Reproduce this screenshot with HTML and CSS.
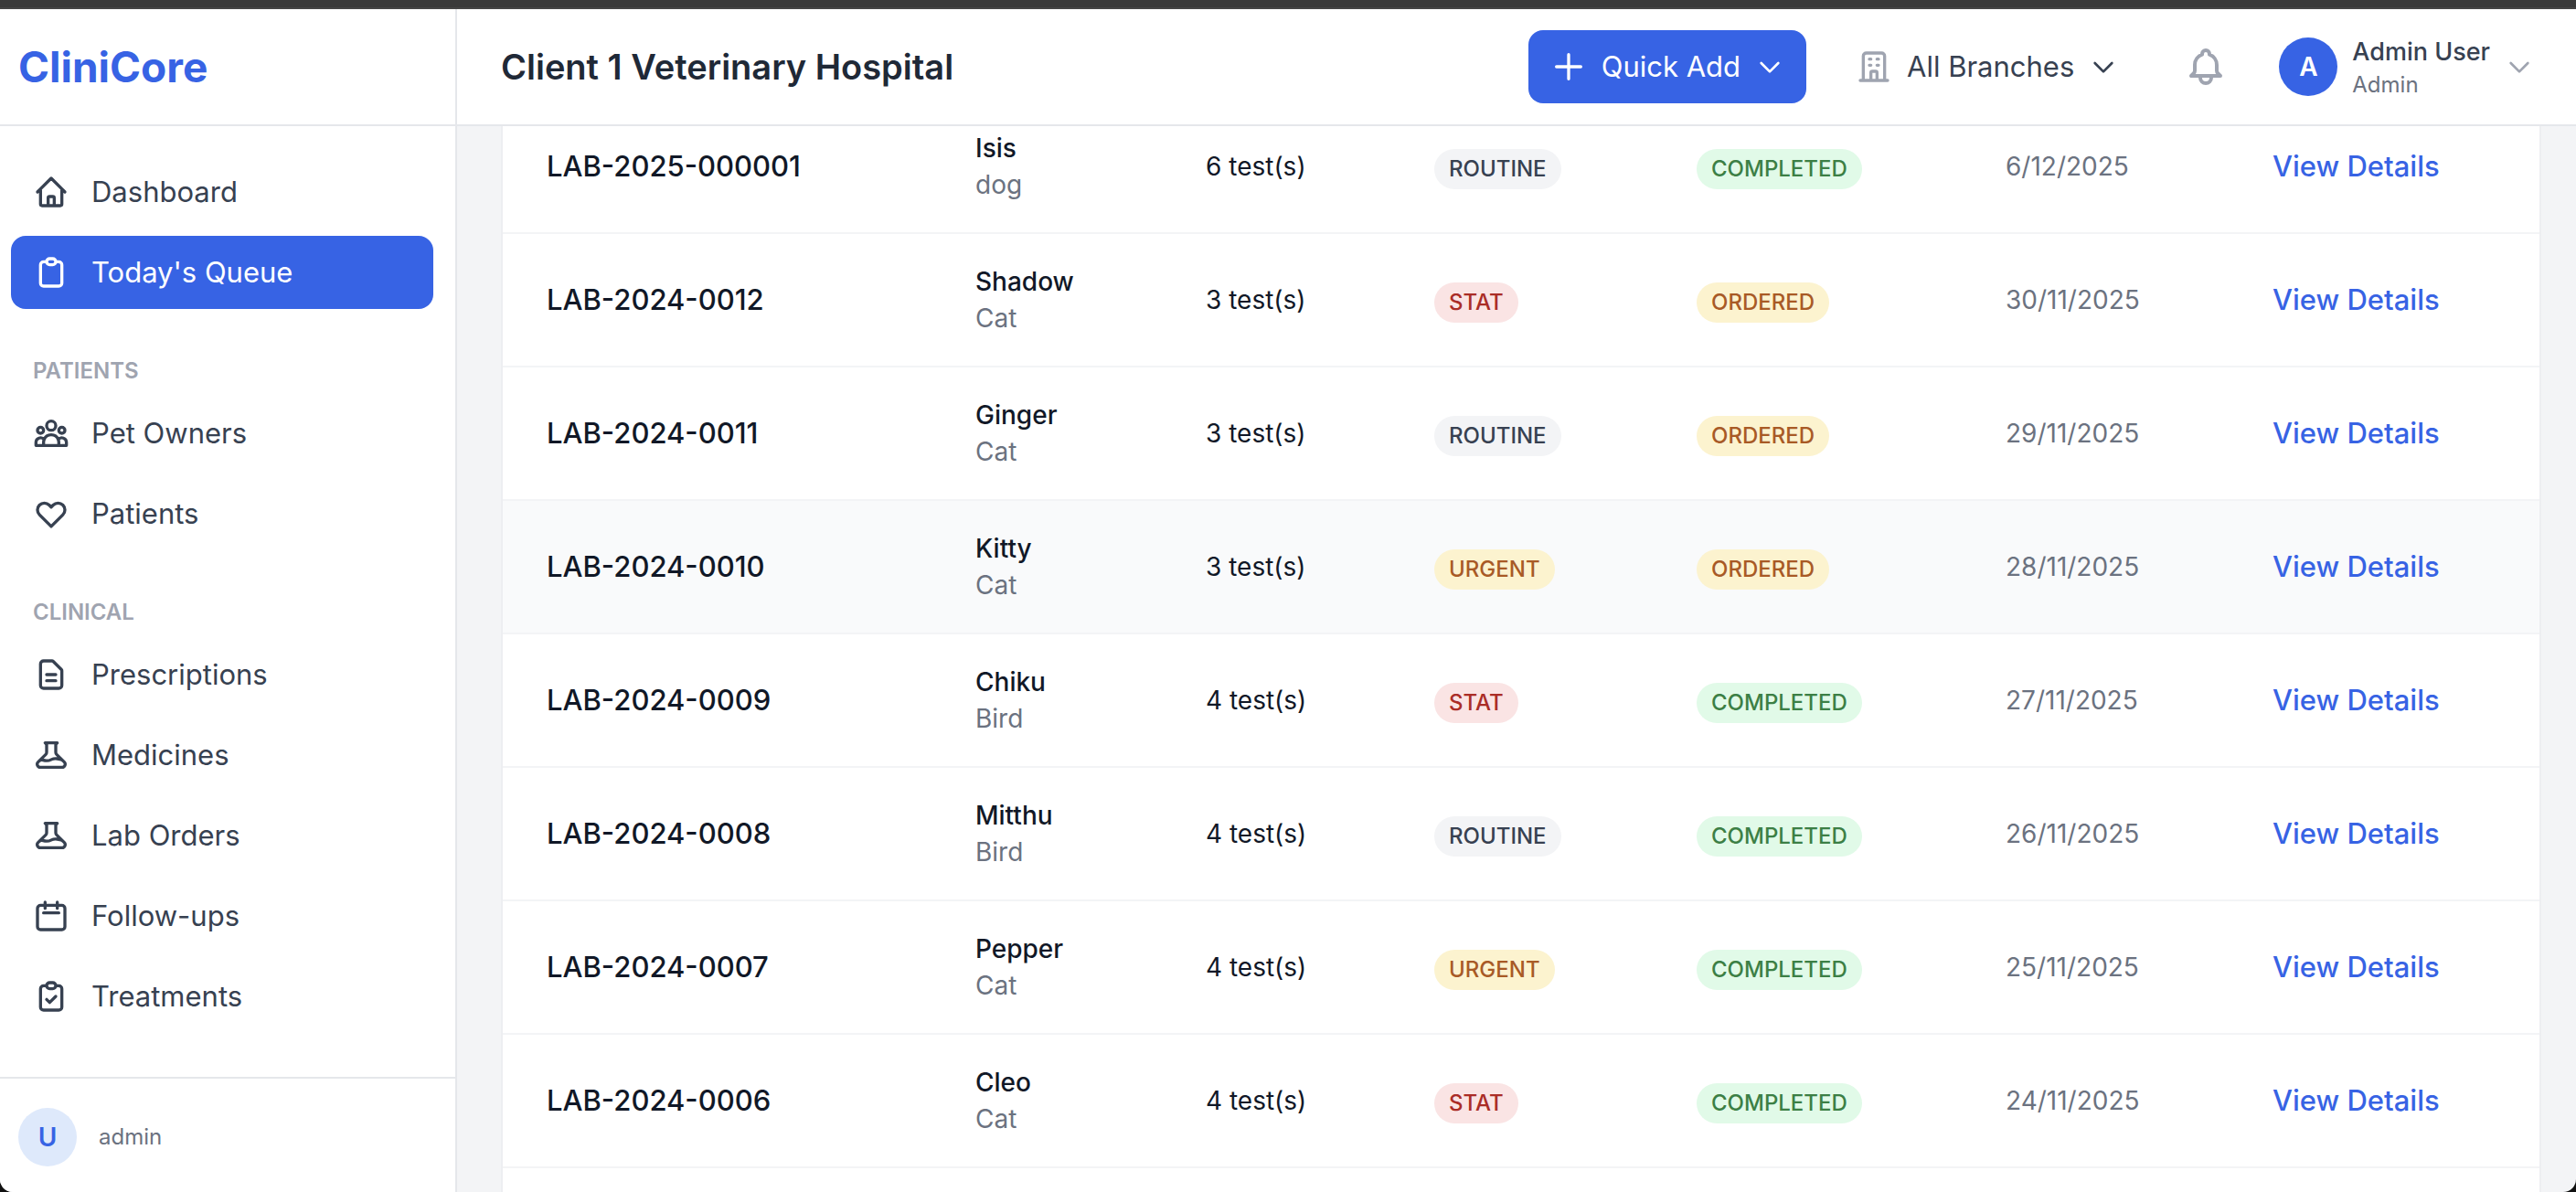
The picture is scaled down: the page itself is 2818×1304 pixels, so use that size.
FILE: index.html
```html
<!DOCTYPE html>
<html lang="en">
<head>
<meta charset="utf-8">
<title>CliniCore</title>
<link rel="stylesheet" href="styles.css">
</head>
<body>
<svg class="sprite" aria-hidden="true">
  <symbol id="home" viewBox="0 0 24 24"><path d="M3 12l2-2m0 0l7-7 7 7M5 10v10a1 1 0 001 1h12a1 1 0 001-1V10m2 2l-2-2M10 21v-5a1 1 0 011-1h2a1 1 0 011 1v5"/></symbol>
  <symbol id="clipboard" viewBox="0 0 24 24"><path d="M9 5H7a2 2 0 00-2 2v12a2 2 0 002 2h10a2 2 0 002-2V7a2 2 0 00-2-2h-2M9 5a2 2 0 002 2h2a2 2 0 002-2M9 5a2 2 0 012-2h2a2 2 0 012 2"/></symbol>
  <symbol id="clipboard-check" viewBox="0 0 24 24"><path d="M9 5H7a2 2 0 00-2 2v12a2 2 0 002 2h10a2 2 0 002-2V7a2 2 0 00-2-2h-2M9 5a2 2 0 002 2h2a2 2 0 002-2M9 5a2 2 0 012-2h2a2 2 0 012 2m-6 9l2 2 4-4"/></symbol>
  <symbol id="users" viewBox="0 0 24 24"><path d="M17 20h5v-2a3 3 0 00-5.356-1.857M17 20H7m10 0v-2c0-.656-.126-1.283-.356-1.857M7 20H2v-2a3 3 0 015.356-1.857M7 20v-2c0-.656.126-1.283.356-1.857m0 0a5.002 5.002 0 019.288 0M15 7a3 3 0 11-6 0 3 3 0 016 0zm6 3a2 2 0 11-4 0 2 2 0 014 0zM7 10a2 2 0 11-4 0 2 2 0 014 0z"/></symbol>
  <symbol id="heart" viewBox="0 0 24 24"><path d="M4.318 6.318a4.5 4.5 0 000 6.364L12 20.364l7.682-7.682a4.5 4.5 0 00-6.364-6.364L12 7.636l-1.318-1.318a4.5 4.5 0 00-6.364 0z"/></symbol>
  <symbol id="document" viewBox="0 0 24 24"><path d="M9 12h6m-6 4h6m2 5H7a2 2 0 01-2-2V5a2 2 0 012-2h5.586a1 1 0 01.707.293l5.414 5.414a1 1 0 01.293.707V19a2 2 0 01-2 2z"/></symbol>
  <symbol id="flask" viewBox="0 0 24 24"><path d="M19.428 15.428a2 2 0 00-1.022-.547l-2.387-.477a6 6 0 00-3.86.517l-.318.158a6 6 0 01-3.86.517L6.05 15.21a2 2 0 00-1.806.547M8 4h8l-1 1v5.172a2 2 0 00.586 1.414l5 5c1.26 1.26.367 3.414-1.415 3.414H4.828c-1.782 0-2.674-2.154-1.414-3.414l5-5A2 2 0 009 10.172V5L8 4z"/></symbol>
  <symbol id="calendar" viewBox="0 0 24 24"><path d="M8 3v4m8-4v4M7 10h10M5 21h14a2 2 0 002-2V7a2 2 0 00-2-2H5a2 2 0 00-2 2v12a2 2 0 002 2z"/></symbol>
  <symbol id="building" viewBox="0 0 24 24"><path d="M19 21V5a2 2 0 00-2-2H7a2 2 0 00-2 2v16m14 0h2m-2 0h-5m-9 0H3m2 0h5M9 7h1m-1 4h1m4-4h1m-1 4h1m-5 10v-5a1 1 0 011-1h2a1 1 0 011 1v5m-4 0h4"/></symbol>
  <symbol id="bell" viewBox="0 0 24 24"><path d="M15 17h5l-1.405-1.405A2.032 2.032 0 0118 14.158V11a6.002 6.002 0 00-4-5.659V5a2 2 0 10-4 0v.341C7.67 6.165 6 8.388 6 11v3.159c0 .538-.214 1.055-.595 1.436L4 17h5m6 0v1a3 3 0 11-6 0v-1m6 0H9"/></symbol>
  <symbol id="plus" viewBox="0 0 24 24"><path d="M12 4v16m8-8H4"/></symbol>
  <symbol id="chevron" viewBox="0 0 24 24"><path d="M19 9l-7 7-7-7"/></symbol>
</svg>
<div class="topline"></div>
<div class="app">
  <aside class="sidebar">
    <div class="brand">CliniCore</div>
    <nav class="nav">
      <a class="nav-item" href="#"><svg class="icon"><use href="#home"/></svg>Dashboard</a>
      <a class="nav-item active" href="#"><svg class="icon"><use href="#clipboard"/></svg>Today's Queue</a>
      <h2 class="nav-title">PATIENTS</h2>
      <a class="nav-item" href="#"><svg class="icon"><use href="#users"/></svg>Pet Owners</a>
      <a class="nav-item" href="#"><svg class="icon"><use href="#heart"/></svg>Patients</a>
      <h2 class="nav-title">CLINICAL</h2>
      <a class="nav-item" href="#"><svg class="icon"><use href="#document"/></svg>Prescriptions</a>
      <a class="nav-item" href="#"><svg class="icon"><use href="#flask"/></svg>Medicines</a>
      <a class="nav-item" href="#"><svg class="icon"><use href="#flask"/></svg>Lab Orders</a>
      <a class="nav-item" href="#"><svg class="icon"><use href="#calendar"/></svg>Follow-ups</a>
      <a class="nav-item" href="#"><svg class="icon"><use href="#clipboard-check"/></svg>Treatments</a>
    </nav>
    <div class="account"><span class="avatar pale">U</span><span>admin</span></div>
  </aside>
  <div class="content">
    <header class="header">
      <h1 class="title">Client 1 Veterinary Hospital</h1>
      <button class="quick-add" type="button"><svg class="icon"><use href="#plus"/></svg>Quick Add<svg class="icon chevron"><use href="#chevron"/></svg></button>
      <button class="branches" type="button"><svg class="icon muted"><use href="#building"/></svg>All Branches<svg class="icon chevron"><use href="#chevron"/></svg></button>
      <button class="bell" type="button" aria-label="Notifications"><svg class="icon large"><use href="#bell"/></svg></button>
      <button class="user" type="button"><span class="avatar">A</span><span class="user-text"><span class="user-name">Admin User</span><span class="user-role">Admin</span></span><svg class="icon chevron muted"><use href="#chevron"/></svg></button>
    </header>
    <main class="main">
      <div class="card">
      <table class="orders">
        <colgroup><col class="c-order"><col class="c-patient"><col class="c-tests"><col class="c-priority"><col class="c-status"><col class="c-date"><col class="c-action"></colgroup>
        <tbody>
          <tr><td class="order">LAB-2025-000001</td><td><div class="pet">Isis</div><div class="species">dog</div></td><td class="tests">6 test(s)</td><td><span class="badge gray">ROUTINE</span></td><td><span class="badge green">COMPLETED</span></td><td class="date">6/12/2025</td><td><a class="details" href="#">View Details</a></td></tr>
          <tr><td class="order">LAB-2024-0012</td><td><div class="pet">Shadow</div><div class="species">Cat</div></td><td class="tests">3 test(s)</td><td><span class="badge red">STAT</span></td><td><span class="badge yellow">ORDERED</span></td><td class="date">30/11/2025</td><td><a class="details" href="#">View Details</a></td></tr>
          <tr><td class="order">LAB-2024-0011</td><td><div class="pet">Ginger</div><div class="species">Cat</div></td><td class="tests">3 test(s)</td><td><span class="badge gray">ROUTINE</span></td><td><span class="badge yellow">ORDERED</span></td><td class="date">29/11/2025</td><td><a class="details" href="#">View Details</a></td></tr>
          <tr class="hovered"><td class="order">LAB-2024-0010</td><td><div class="pet">Kitty</div><div class="species">Cat</div></td><td class="tests">3 test(s)</td><td><span class="badge yellow">URGENT</span></td><td><span class="badge yellow">ORDERED</span></td><td class="date">28/11/2025</td><td><a class="details" href="#">View Details</a></td></tr>
          <tr><td class="order">LAB-2024-0009</td><td><div class="pet">Chiku</div><div class="species">Bird</div></td><td class="tests">4 test(s)</td><td><span class="badge red">STAT</span></td><td><span class="badge green">COMPLETED</span></td><td class="date">27/11/2025</td><td><a class="details" href="#">View Details</a></td></tr>
          <tr><td class="order">LAB-2024-0008</td><td><div class="pet">Mitthu</div><div class="species">Bird</div></td><td class="tests">4 test(s)</td><td><span class="badge gray">ROUTINE</span></td><td><span class="badge green">COMPLETED</span></td><td class="date">26/11/2025</td><td><a class="details" href="#">View Details</a></td></tr>
          <tr><td class="order">LAB-2024-0007</td><td><div class="pet">Pepper</div><div class="species">Cat</div></td><td class="tests">4 test(s)</td><td><span class="badge yellow">URGENT</span></td><td><span class="badge green">COMPLETED</span></td><td class="date">25/11/2025</td><td><a class="details" href="#">View Details</a></td></tr>
          <tr><td class="order">LAB-2024-0006</td><td><div class="pet">Cleo</div><div class="species">Cat</div></td><td class="tests">4 test(s)</td><td><span class="badge red">STAT</span></td><td><span class="badge green">COMPLETED</span></td><td class="date">24/11/2025</td><td><a class="details" href="#">View Details</a></td></tr>
        </tbody>
      </table>
      </div>
    </main>
  </div>
</div>
</body>
</html>
```
FILE: styles.css
```css
* { box-sizing: border-box; }
body {
  margin: 0;
  height: 100vh;
  display: flex;
  flex-direction: column;
  overflow: hidden;
  font-family: Inter, "Liberation Sans", sans-serif;
  font-size: 31px;
  line-height: 48px;
  color: #374151;
  background: #111;
}
button {
  font: inherit;
  color: inherit;
  background: none;
  border: 0;
  padding: 0;
  display: flex;
  align-items: center;
}
a { text-decoration: none; color: inherit; }
h1, h2 { margin: 0; }
.sprite { display: none; }
.topline {
  flex: none;
  height: 10px;
  background: #3a3a3a;
  border-bottom: 2px solid #454545;
}
.app {
  flex: 1;
  min-height: 0;
  display: flex;
  background: #f3f4f6;
  border-radius: 0 0 14px 14px;
  overflow: hidden;
}
.icon {
  flex: none;
  width: 40px;
  height: 40px;
  fill: none;
  stroke: currentColor;
  stroke-width: 2;
  stroke-linecap: round;
  stroke-linejoin: round;
}
.icon.chevron { width: 32px; height: 32px; }
.icon.large { width: 48px; height: 48px; }
.muted { color: #9fa4b0; }

.sidebar {
  flex: none;
  width: 500px;
  display: flex;
  flex-direction: column;
  background: #fff;
  border-right: 2px solid #e5e7eb;
}
.brand {
  height: 128px;
  padding: 0 20px;
  display: flex;
  align-items: center;
  border-bottom: 2px solid #e5e7eb;
  font-size: 46px;
  font-weight: 700;
  color: #3763e4;
}
.nav {
  flex: 1;
  padding: 32px 24px 0 12px;
  display: flex;
  flex-direction: column;
  gap: 8px;
}
.nav-item {
  display: flex;
  align-items: center;
  gap: 24px;
  padding: 16px 24px;
  border-radius: 16px;
}
.nav-item.active { background: #3763e4; color: #fff; }
.nav-title {
  padding: 40px 24px 0;
  font-size: 24px;
  line-height: 40px;
  font-weight: 600;
  color: #9fa4b0;
}
.account {
  display: flex;
  align-items: center;
  gap: 24px;
  padding: 32px 20px 28px;
  border-top: 2px solid #e5e7eb;
  font-size: 24px;
  color: #6b7280;
}
.avatar {
  flex: none;
  width: 64px;
  height: 64px;
  border-radius: 50%;
  display: flex;
  align-items: center;
  justify-content: center;
  background: #3763e4;
  color: #fff;
  font-size: 28px;
  font-weight: 600;
}
.avatar.pale { background: #dee9fb; color: #3763e4; }

.content {
  flex: 1;
  min-width: 0;
  display: flex;
  flex-direction: column;
}
.header {
  flex: none;
  height: 128px;
  padding: 0 46px 0 48px;
  display: flex;
  align-items: center;
  background: #fff;
  border-bottom: 2px solid #e5e7eb;
}
.title {
  margin-right: auto;
  font-size: 38px;
  font-weight: 600;
  color: #1f2937;
}
.quick-add {
  padding: 16px 24px;
  gap: 16px;
  border-radius: 16px;
  background: #3763e4;
  color: #fff;
}
.branches { margin-left: 54px; gap: 16px; }
.bell { margin-left: 72px; color: #9fa4b0; }
.user { margin-left: 56px; gap: 16px; text-align: left; }
.user-text { display: flex; flex-direction: column; }
.user-name { font-size: 27px; line-height: 40px; font-weight: 500; }
.user-role { font-size: 24px; line-height: 32px; color: #6b7280; }

.main {
  flex: 1;
  min-height: 0;
  padding: 0 38px 0 48px;
  overflow: hidden;
  display: flex;
  flex-direction: column;
  justify-content: flex-end;
}
.card {
  flex: none;
  padding-bottom: 26px;
  background: #fff;
  border: solid #edeef1;
  border-width: 0 2px;
}
.orders {
  width: 100%;
  table-layout: fixed;
  border-collapse: separate;
  border-spacing: 0;
}
.orders td {
  height: 146px;
  padding: 0 48px;
  border-bottom: 2px solid #f3f4f6;
  white-space: nowrap;
}
.hovered { background: #f9fafb; }
.order { font-weight: 500; color: #111827; }
.pet { font-size: 28px; line-height: 40px; font-weight: 500; color: #111827; }
.species { font-size: 28px; line-height: 40px; color: #6b7280; }
.tests { font-size: 28px; color: #111827; }
.date { font-size: 28px; color: #6b7280; }
.details { font-weight: 500; color: #3763e4; }
.badge {
  display: inline-block;
  padding: 6px 16px;
  border-radius: 22px;
  font-size: 24px;
  line-height: 32px;
  font-weight: 500;
}
.gray { background: #f3f4f6; color: #374151; }
.red { background: #fae4e4; color: #aa2d27; }
.yellow { background: #fcf3cf; color: #a85a26; }
.green { background: #e1fae8; color: #3c7f45; }
.c-order { width: 469px; }
.c-patient { width: 252px; }
.c-tests { width: 250px; }
.c-priority { width: 287px; }
.c-status { width: 338px; }
.c-date { width: 292px; }
```
